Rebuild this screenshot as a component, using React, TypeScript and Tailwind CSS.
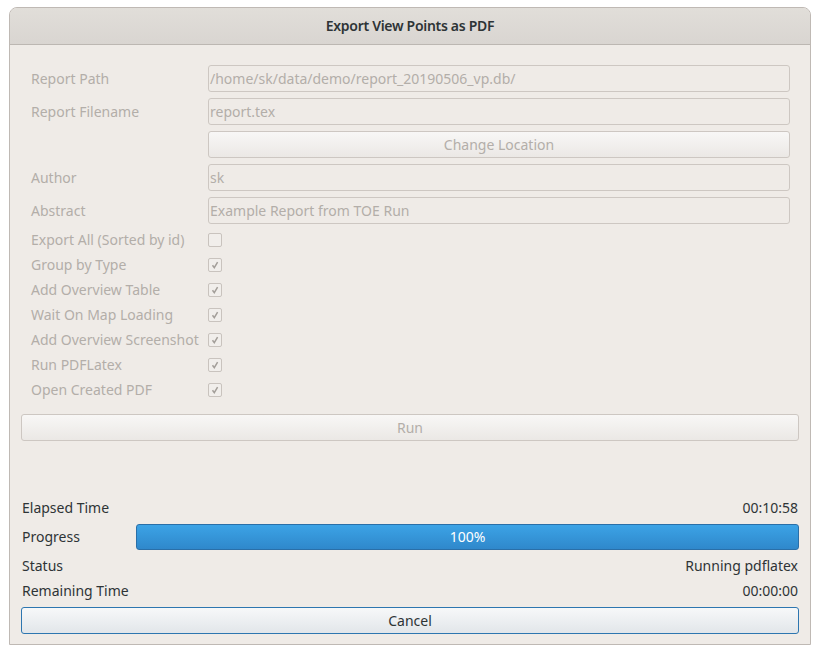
import React from 'react';

const fields = [
  { label: 'Report Path', value: '/home/sk/data/demo/report_20190506_vp.db/' },
  { label: 'Report Filename', value: 'report.tex' },
];

const checks = [
  { label: 'Export All (Sorted by id)', checked: false },
  { label: 'Group by Type', checked: true },
  { label: 'Add Overview Table', checked: true },
  { label: 'Wait On Map Loading', checked: true },
  { label: 'Add Overview Screenshot', checked: true },
  { label: 'Run PDFLatex', checked: true },
  { label: 'Open Created PDF', checked: true },
];

function TextRow({ label, value }: { label: string; value: string }) {
  return (
    <div className="flex h-[27px] items-center">
      <div className="w-[177px] shrink-0 text-[#b3aea9]">{label}</div>
      <div className="flex h-full flex-1 items-center rounded-[3px] border border-[#cdc7c2] bg-[#efebe7] px-[1px] text-[#b3aea9]">
        {value}
      </div>
    </div>
  );
}

function CheckRow({ label, checked }: { label: string; checked: boolean }) {
  return (
    <div className="flex h-[19px] items-center">
      <div className="w-[177px] shrink-0 whitespace-nowrap text-[#b3aea9]">{label}</div>
      <div className="flex h-[14px] w-[14px] items-center justify-center rounded-[2px] border border-[#c9c3be] bg-[#f1eeeb]">
        {checked && (
          <svg width="10" height="10" viewBox="0 0 10 10">
            <path d="M2.5 5.2 L4.3 7.6 L7.6 2.2" fill="none" stroke="#a39e99" strokeWidth="1.5" />
          </svg>
        )}
      </div>
    </div>
  );
}

export default function App() {
  return (
    <div className="h-[655px] w-[820px] bg-white pl-[9px] pt-[7px] text-[14px] leading-none" style={{ fontFamily: '"Noto Sans", "Open Sans", sans-serif' }}>
      <div className="w-[802px] overflow-hidden rounded-t-[8px] border border-[#bfb9b4] bg-[#efebe7]">
        {/* Title bar */}
        <div className="flex h-[37px] items-center justify-center border-b border-[#bcb7b2] bg-gradient-to-b from-[#e1ded9] to-[#d9d5d1] text-[14px] font-semibold tracking-[-0.3px] text-[#2e3436]">
          Export View Points as PDF
        </div>

        <div className="px-[11px] pb-[10px]">
          {/* Form */}
          <div className="flex flex-col gap-[6px] pl-[10px] pr-[9px] pt-[20px]">
            {fields.map((f) => (
              <TextRow key={f.label} label={f.label} value={f.value} />
            ))}
            <div className="flex h-[27px]">
              <div className="w-[177px] shrink-0" />
              <div className="flex flex-1 items-center justify-center rounded-[3px] border border-[#cdc7c2] bg-gradient-to-b from-[#f8f7f6] to-[#ebe8e5] text-[#b3aea9]">
                Change Location
              </div>
            </div>
            <TextRow label="Author" value="sk" />
            <TextRow label="Abstract" value="Example Report from TOE Run" />
            {checks.map((c) => (
              <CheckRow key={c.label} label={c.label} checked={c.checked} />
            ))}
          </div>

          <div className="mt-[15px] flex h-[27px] items-center justify-center rounded-[3px] border border-[#cdc7c2] bg-gradient-to-b from-[#f8f7f6] to-[#ebe8e5] text-[#b3aea9]">
            Run
          </div>

          {/* Progress area */}
          <div className="mt-[57px] flex flex-col text-[#2e3436]">
            <div className="flex h-[20px] items-center justify-between px-px">
              <span>Elapsed Time</span>
              <span>00:10:58</span>
            </div>
            <div className="mt-[6px] flex h-[26px] items-center">
              <div className="w-[115px] shrink-0 px-px">Progress</div>
              <div className="flex h-full flex-1 items-center justify-center rounded-[3px] border border-[#2a6fa8] bg-gradient-to-b from-[#3ca3e6] to-[#2f88cb] text-white">
                100%
              </div>
            </div>
            <div className="mt-[6px] flex h-[20px] items-center justify-between px-px">
              <span>Status</span>
              <span>Running pdflatex</span>
            </div>
            <div className="mt-[5px] flex h-[20px] items-center justify-between px-px">
              <span>Remaining Time</span>
              <span>00:00:00</span>
            </div>
            <div className="mt-[6px] flex h-[27px] items-center justify-center rounded-[3px] border border-[#2d76b0] bg-gradient-to-b from-[#f7f8f9] to-[#e2e6ea]">
              Cancel
            </div>
          </div>
        </div>
      </div>
    </div>
  );
}
